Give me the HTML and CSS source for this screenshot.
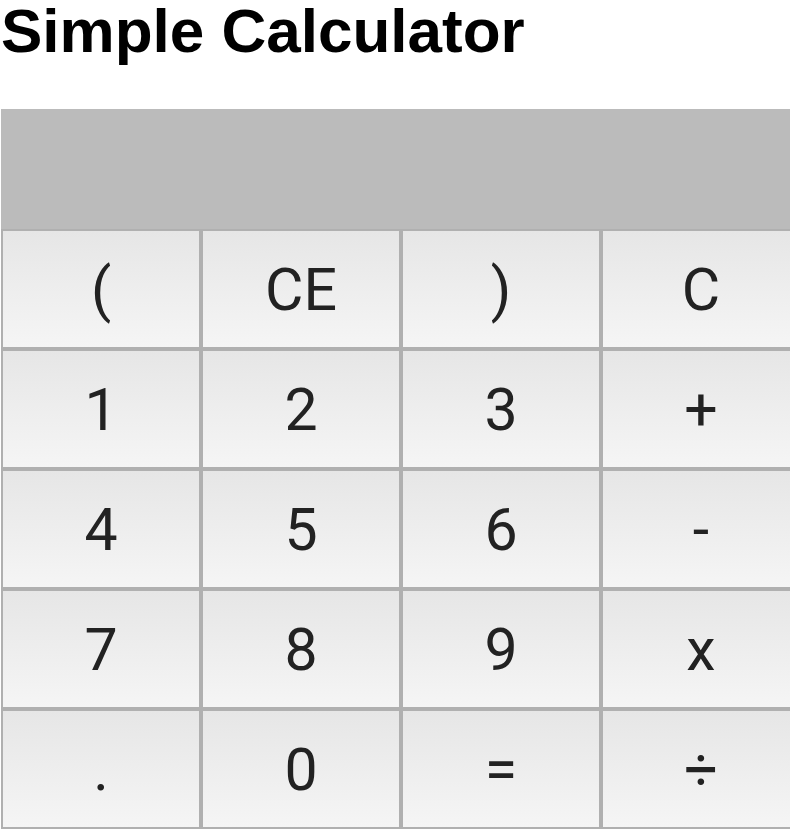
FILE: index.html
```html
<!DOCTYPE html>
<html lang="en">
<head>
<meta charset="utf-8">
<title>Simple Calculator</title>
<link rel="stylesheet" href="styles.css">
</head>
<body>
<h1 class="title">Simple Calculator</h1>
<div class="calc">
  <div class="display"></div>
  <div class="keys">
    <button class="key">(</button>
    <button class="key">CE</button>
    <button class="key">)</button>
    <button class="key">C</button>
    <button class="key">1</button>
    <button class="key">2</button>
    <button class="key">3</button>
    <button class="key">+</button>
    <button class="key">4</button>
    <button class="key">5</button>
    <button class="key">6</button>
    <button class="key">-</button>
    <button class="key">7</button>
    <button class="key">8</button>
    <button class="key">9</button>
    <button class="key">x</button>
    <button class="key">.</button>
    <button class="key">0</button>
    <button class="key">=</button>
    <button class="key">÷</button>
  </div>
</div>
</body>
</html>
```
FILE: styles.css
```css
html, body {
  margin: 0;
  padding: 0;
  background: #ffffff;
  overflow: hidden;
}
.title {
  font-family: "Liberation Sans", Arial, sans-serif;
  font-weight: bold;
  font-size: 62px;
  line-height: 62px;
  margin: 0 0 47px 1px;
  color: #000;
}
.calc {
  margin-left: 1px;
  width: 800px;
}
.display {
  height: 120px;
  background: #bbbbbb;
}
.keys {
  display: grid;
  grid-template-columns: repeat(4, 200px);
  grid-auto-rows: 120px;
}
.key {
  -webkit-appearance: none;
  appearance: none;
  margin: 0;
  padding: 0;
  border: 2px solid #b0b0b0;
  background: linear-gradient(to bottom, #e6e6e6, #f5f5f5);
  font-family: Roboto, "Liberation Sans", sans-serif;
  font-size: 59px;
  font-weight: 400;
  color: #222222;
  display: flex;
  align-items: center;
  justify-content: center;
  line-height: 1;
}
```
